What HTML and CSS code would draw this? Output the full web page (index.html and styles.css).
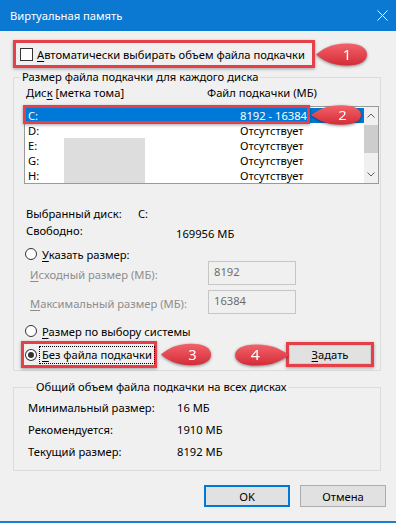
FILE: index.html
```html
<!DOCTYPE html>
<html lang="ru">
<head>
    <meta charset="UTF-8">
    <meta name="viewport" content="width=device-width, initial-scale=1.0">
    <title>Виртуальная память</title>
    <link rel="stylesheet" href="styles.css">
</head>
<body>
<div class="window">
    <div class="titlebar">
        <span class="title">Виртуальная память</span>
        <svg class="close" viewBox="0 0 11 11" width="11" height="11">
            <path d="M0.5 0.5 L10.5 10.5 M10.5 0.5 L0.5 10.5" stroke="#fff" stroke-width="1" fill="none"/>
        </svg>
    </div>

    <div class="auto-row">
        <div class="frame auto-frame">
            <span class="checkbox"></span>
            <span><u>А</u>втоматически выбирать объем файла подкачки</span>
        </div>
        <svg class="badge badge-1" viewBox="0 0 54 27" width="54" height="27">
            <defs>
                <linearGradient id="badgeFill" x1="0" y1="0" x2="0" y2="1">
                    <stop offset="0" stop-color="#f2636a"/>
                    <stop offset="1" stop-color="#d42c37"/>
                </linearGradient>
            </defs>
            <path class="badge-shape" d="M1 13.5 C 8 8, 16 2.5, 32 2.5 C 45 2.5, 52 7, 52 13.5 C 52 20, 45 24.5, 32 24.5 C 16 24.5, 8 19, 1 13.5 Z"/>
            <text x="32" y="19" class="badge-num">1</text>
        </svg>
    </div>

    <fieldset class="group">
        <legend>Размер файла подкачки для каждого диска</legend>
        <div class="list-head">
            <span class="col-disk">Дис<u>к</u> [метка тома]</span>
            <span>Файл подкачки (МБ)</span>
        </div>

        <div class="listbox">
            <div class="rows">
                <div class="row selected"><span class="disk">C:</span><span>8192 - 16384</span></div>
                <div class="row"><span class="disk">D:</span><span>Отсутствует</span></div>
                <div class="row"><span class="disk">E:</span><span>Отсутствует</span></div>
                <div class="row"><span class="disk">G:</span><span>Отсутствует</span></div>
                <div class="row"><span class="disk">H:</span><span>Отсутствует</span></div>
            </div>
            <div class="scrollbar">
                <div class="arrow">
                    <svg viewBox="0 0 8 5" width="8" height="5"><path d="M0.5 4.5 L4 1 L7.5 4.5" stroke="#606060" fill="none"/></svg>
                </div>
                <div class="track"><div class="thumb"></div></div>
                <div class="arrow">
                    <svg viewBox="0 0 8 5" width="8" height="5"><path d="M0.5 0.5 L4 4 L7.5 0.5" stroke="#606060" fill="none"/></svg>
                </div>
            </div>
            <div class="redact"></div>
            <div class="frame row-frame"></div>
            <svg class="badge badge-2" viewBox="0 0 54 27" width="53" height="24" preserveAspectRatio="none">
                <path class="badge-shape" d="M1 13.5 C 8 8, 16 2.5, 32 2.5 C 45 2.5, 52 7, 52 13.5 C 52 20, 45 24.5, 32 24.5 C 16 24.5, 8 19, 1 13.5 Z"/>
                <text x="33" y="19" class="badge-num">2</text>
            </svg>
        </div>

        <div class="info">
            <div class="info-row"><span class="info-label">Выбранный диск:</span><span>C:</span></div>
            <div class="info-row"><span class="info-label wide">Свободно:</span><span class="free">169956 МБ</span></div>
        </div>

        <div class="radio-row custom">
            <span class="radio"></span>
            <span><u>У</u>казать размер:</span>
        </div>
        <div class="size-row">
            <span class="size-label"><u>И</u>сходный размер (МБ):</span>
            <span class="size-input">8192</span>
        </div>
        <div class="size-row">
            <span class="size-label"><u>М</u>аксимальный размер (МБ):</span>
            <span class="size-input">16384</span>
        </div>

        <div class="radio-row system">
            <span class="radio"></span>
            <span><u>Р</u>азмер по выбору системы</span>
        </div>

        <div class="action-row">
            <div class="frame none-frame">
                <span class="radio checked"></span>
                <span class="focus"><u>Б</u>ез файла подкачки</span>
            </div>
            <svg class="badge badge-3" viewBox="0 0 54 27" width="53" height="27">
                <path class="badge-shape" d="M1 13.5 C 8 8, 16 2.5, 32 2.5 C 45 2.5, 52 7, 52 13.5 C 52 20, 45 24.5, 32 24.5 C 16 24.5, 8 19, 1 13.5 Z"/>
                <text x="33" y="19" class="badge-num">3</text>
            </svg>
            <svg class="badge badge-4" viewBox="0 0 54 27" width="57" height="26" preserveAspectRatio="none">
                <path class="badge-shape" transform="translate(54 0) scale(-1 1)" d="M1 13.5 C 8 8, 16 2.5, 32 2.5 C 45 2.5, 52 7, 52 13.5 C 52 20, 45 24.5, 32 24.5 C 16 24.5, 8 19, 1 13.5 Z"/>
                <text x="21" y="19" class="badge-num">4</text>
            </svg>
            <div class="frame set-frame">
                <button class="btn set-btn"><u>З</u>адать</button>
            </div>
        </div>
    </fieldset>

    <fieldset class="group total">
        <legend>Общий объем файла подкачки на всех дисках</legend>
        <div class="total-row"><span class="total-label">Минимальный размер:</span><span>16 МБ</span></div>
        <div class="total-row"><span class="total-label">Рекомендуется:</span><span>1910 МБ</span></div>
        <div class="total-row"><span class="total-label">Текущий размер:</span><span>8192 МБ</span></div>
    </fieldset>

    <div class="actions">
        <button class="btn default">OK</button>
        <button class="btn">Отмена</button>
    </div>
</div>
</body>
</html>
```

FILE: styles.css
```css
* {
  box-sizing: border-box;
}

body {
  margin: 0;
  font-family: "Noto Sans", sans-serif;
  font-size: 11.2px;
  color: #000;
  background-color: #f0f0f0;
  white-space: nowrap;
}

u {
  text-decoration-thickness: 1px;
  text-underline-offset: 2px;
}

.window {
  width: 396px;
  height: 523px;
  display: flex;
  flex-direction: column;
  background-color: #f0f0f0;
  border-bottom: 2px solid #1a7fd4;
}

.titlebar {
  height: 31px;
  flex-shrink: 0;
  display: flex;
  align-items: center;
  justify-content: space-between;
  padding: 0 8px 0 10px;
  background-color: #0b78d2;
  color: #fff;
}

/* red annotation frames */
.frame {
  border: 3px solid #e5404a;
  box-shadow: 0 1px 3px rgba(0, 0, 0, 0.35);
}

.badge {
  display: block;
  flex-shrink: 0;
  overflow: visible;
  filter: drop-shadow(0 1px 1.5px rgba(0, 0, 0, 0.45));
}

.badge-shape {
  fill: url(#badgeFill);
}

.badge-num {
  fill: #fff;
  font-family: "Noto Sans", sans-serif;
  font-size: 15px;
  text-anchor: middle;
}

.auto-row {
  display: flex;
  align-items: center;
  margin: 9px 0 0 13px;
}

.auto-frame {
  width: 302px;
  height: 28px;
  display: flex;
  align-items: center;
  gap: 4px;
  padding-left: 4px;
}

.checkbox {
  width: 13px;
  height: 13px;
  border: 1px solid #333;
  background-color: #fff;
}

.group {
  margin: 1px 15px 0 13px;
  padding: 0 0 2px 0;
  border: 1px solid #dcdcdc;
  min-width: 0;
}

.group legend {
  margin-left: 6px;
  padding: 0 2px;
  line-height: 16px;
}

.list-head {
  display: flex;
  padding-left: 12px;
  line-height: 16px;
}

.col-disk {
  width: 181px;
}

.listbox {
  position: relative;
  display: flex;
  width: 355px;
  height: 78px;
  margin: 5px 0 0 10px;
  border: 1px solid #9a9a9a;
  background-color: #fff;
}

.rows {
  flex: 1;
  padding-top: 1px;
}

.row {
  display: flex;
  height: 15px;
  line-height: 15px;
  padding-left: 3px;
}

.row .disk {
  width: 212px;
}

.row.selected {
  background-color: #0078d7;
  color: #fff;
}

.scrollbar {
  width: 14px;
  display: flex;
  flex-direction: column;
  background-color: #f0f0f0;
}

.arrow {
  height: 17px;
  display: flex;
  align-items: center;
  justify-content: center;
}

.track {
  flex: 1;
  padding-top: 1px;
}

.thumb {
  height: 28px;
  background-color: #cdcdcd;
}

.redact {
  position: absolute;
  left: 39px;
  top: 31px;
  width: 81px;
  height: 45px;
  background-color: #dddddd;
}

.row-frame {
  position: absolute;
  left: -2px;
  top: -2px;
  width: 287px;
  height: 19px;
}

.badge-2 {
  position: absolute;
  left: 285px;
  top: -4px;
}

.info {
  margin-top: 21px;
  padding-left: 12px;
}

.info-row {
  display: flex;
  line-height: 17px;
}

.info-label {
  width: 112px;
}

.info-label.wide {
  width: 150px;
}

.free {
  padding-top: 3px;
}

.radio-row {
  display: flex;
  align-items: center;
  gap: 5px;
  height: 14px;
  padding-left: 11px;
}

.radio-row.custom {
  margin-top: 5px;
}

.radio-row.system {
  margin-top: 10px;
}

.radio {
  width: 12px;
  height: 12px;
  border: 1px solid #333;
  border-radius: 50%;
  background-color: #fff;
  display: flex;
  align-items: center;
  justify-content: center;
}

.radio.checked::after {
  content: "";
  width: 6px;
  height: 6px;
  border-radius: 50%;
  background-color: #333;
}

.size-row {
  display: flex;
  align-items: center;
  height: 24px;
  padding-left: 16px;
  color: #8d8d8d;
}

.size-row + .size-row {
  margin-top: 5px;
}

.size-label {
  width: 178px;
  padding-top: 2px;
}

.size-input {
  width: 88px;
  height: 24px;
  padding: 2px 0 0 5px;
  line-height: 16px;
  border: 1px solid #c6c6c6;
  color: #6d6d6d;
}

.action-row {
  display: flex;
  align-items: center;
  height: 27px;
  margin-top: 3px;
}

.none-frame {
  width: 136px;
  height: 27px;
  margin-left: 7px;
  display: flex;
  align-items: center;
  padding-left: 1px;
}

.focus {
  margin-left: 3px;
  padding: 0 2px;
  line-height: 16px;
  outline: 1px dotted #000;
}

.badge-3 {
  margin-left: 3px;
}

.badge-4 {
  margin-left: 20px;
}

.set-frame {
  width: 88px;
  height: 25px;
  margin-left: -4px;
  display: flex;
}

.btn {
  font-family: "Noto Sans", sans-serif;
  font-size: 11.2px;
  color: #000;
  background-color: #e1e1e1;
  border: 1px solid #adadad;
  padding: 0;
}

.set-btn {
  flex: 1;
  border-color: #d0d0d0;
}

.group.total {
  margin-top: 8px;
  padding: 2px 0 7px 14px;
}

.total-row {
  display: flex;
  line-height: 22px;
}

.total-label {
  width: 149px;
}

.actions {
  display: flex;
  justify-content: flex-end;
  gap: 10px;
  margin-top: 14px;
  padding-right: 10px;
}

.actions .btn {
  width: 86px;
  height: 22px;
}

.actions .btn.default {
  border: 2px solid #0078d7;
}
```
